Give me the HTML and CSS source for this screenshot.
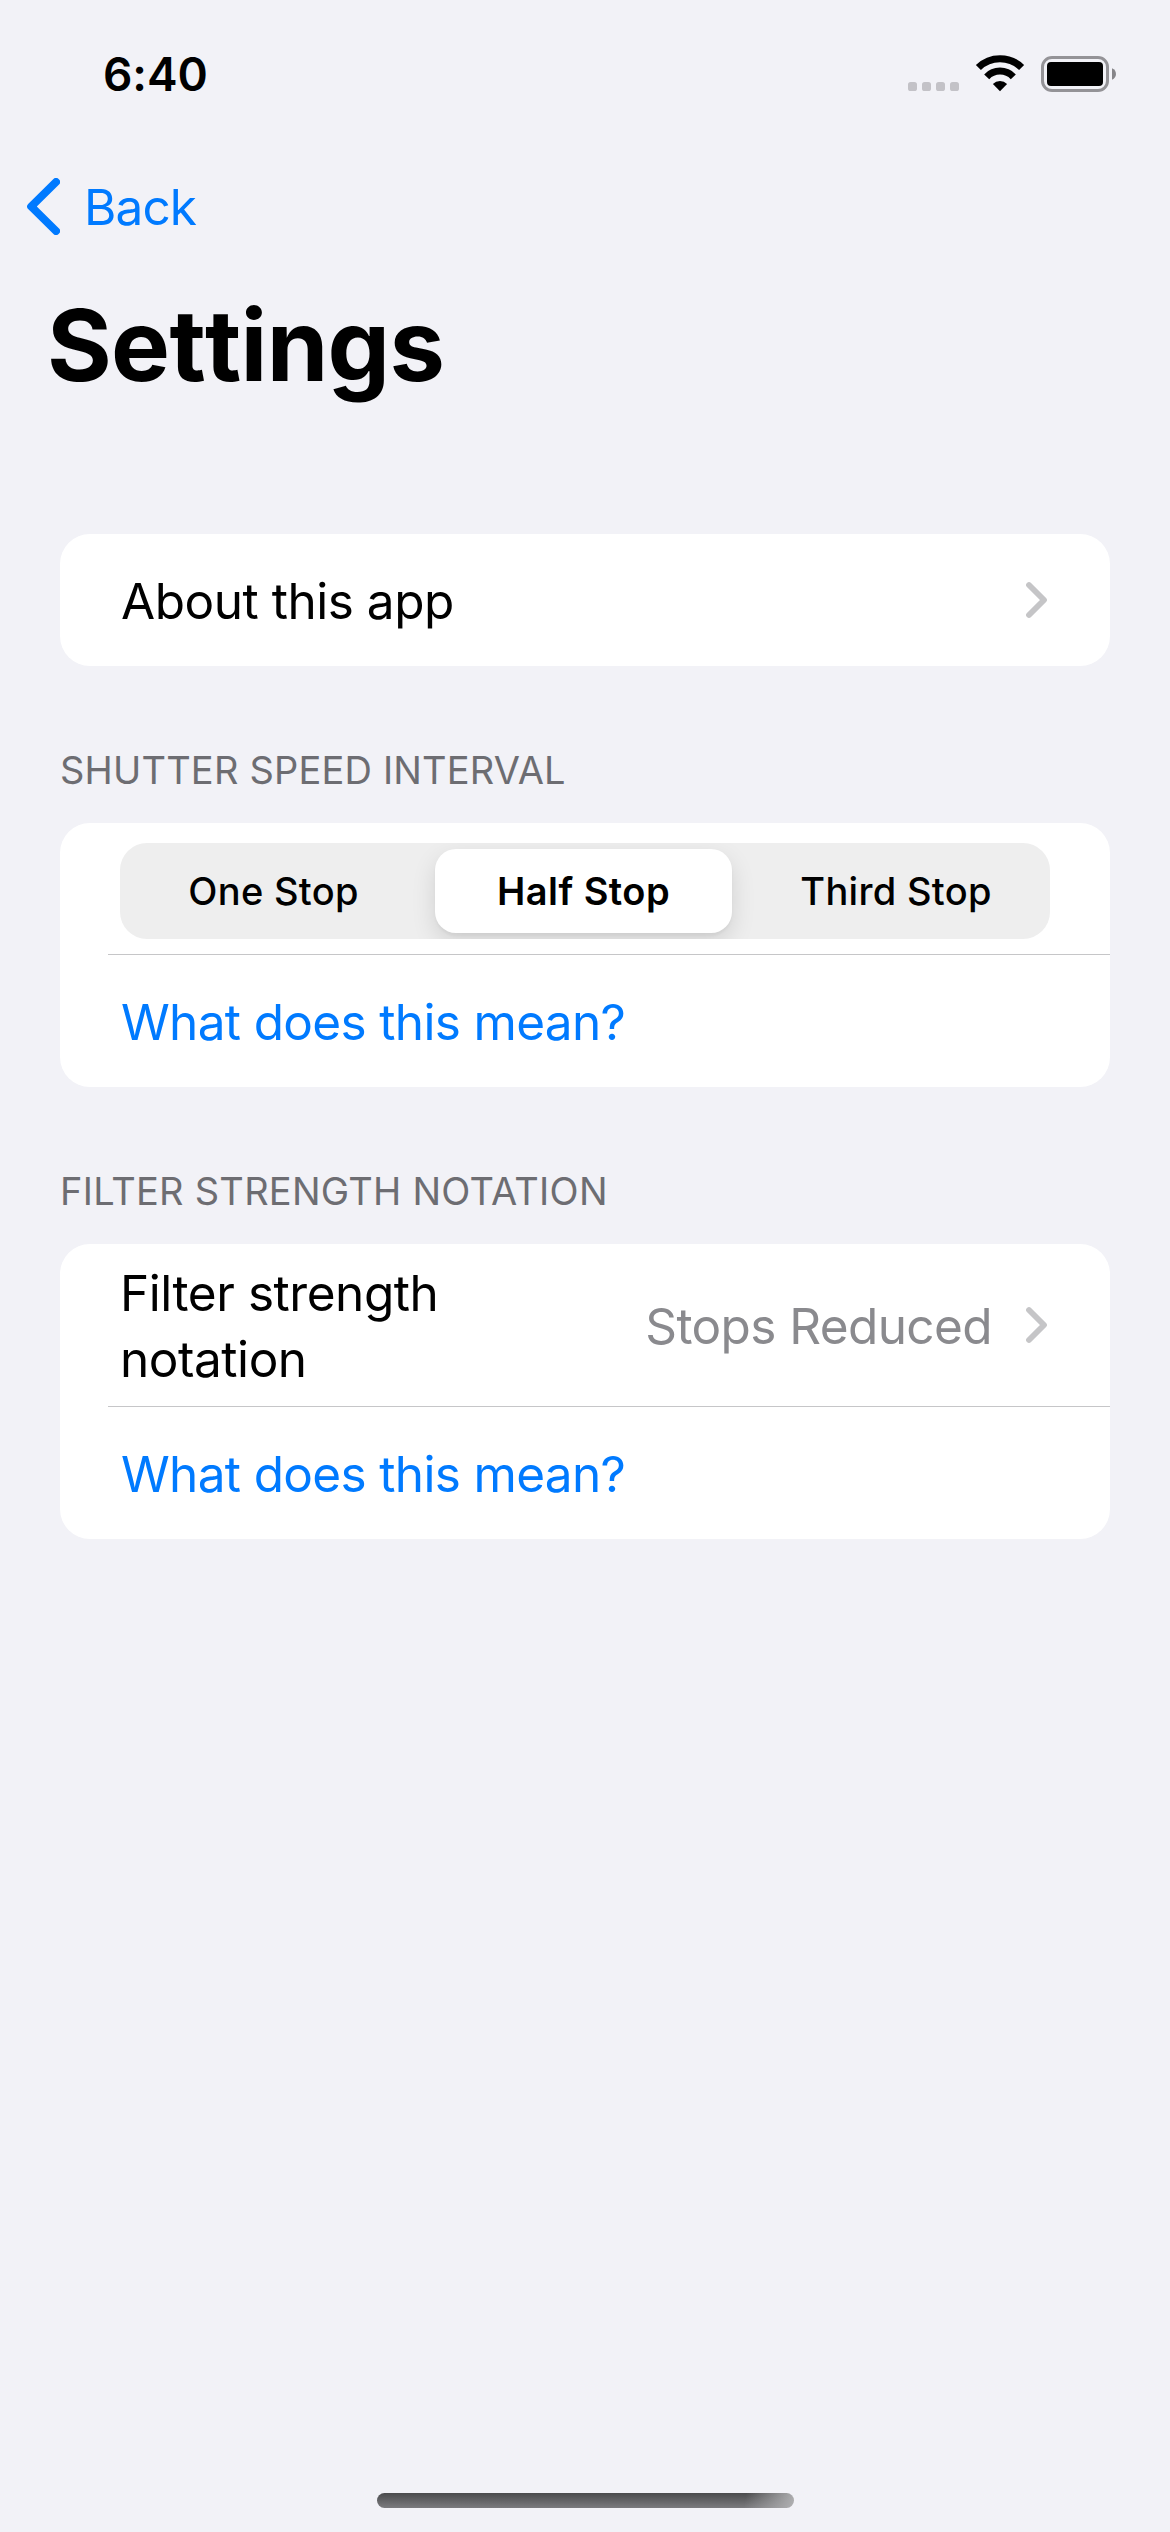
FILE: index.html
```
<!DOCTYPE html>
<html lang="en">
<head>
<meta charset="utf-8">
<title>Settings</title>
<link rel="stylesheet" href="styles.css">
</head>
<body>
<div class="screen">
  <header class="status-bar">
    <div class="time">6:40</div>
    <div class="status-icons">
      <svg class="cellular" width="51" height="9" viewBox="0 0 51 9"><g fill="#c3c2c7"><rect width="9" height="9" rx="2.6"/><rect x="14" width="9" height="9" rx="2.6"/><rect x="28" width="9" height="9" rx="2.6"/><rect x="42" width="9" height="9" rx="2.6"/></g></svg>
      <svg class="wifi" width="50" height="37" viewBox="0 0 50 37">
        <g fill="none" stroke="#000">
          <path stroke-width="7.2" d="M3.4 12.5A31 31 0 0 1 46.6 12.5"/>
          <path stroke-width="7" d="M11.7 21.8A18.4 18.4 0 0 1 38.3 21.8"/>
        </g>
        <path d="M25 36.2L17.9 28.9A10 10 0 0 1 32.1 28.9Z"/>
      </svg>
      <svg class="battery" width="76" height="37" viewBox="0 0 76 37">
        <rect x="1.5" y="2.5" width="65" height="33" rx="9.5" fill="none" stroke="#949397" stroke-width="3"/>
        <rect x="6" y="7" width="56" height="24" rx="4"/>
        <path d="M71 13.3C76.3 15.3 76.3 22.7 71 24.7Z" fill="#868589"/>
      </svg>
    </div>
  </header>

  <nav class="nav-bar">
    <svg width="33" height="57" viewBox="0 0 33 57"><path d="M29 4L4.2 28.5L29 53" fill="none" stroke="#007aff" stroke-width="8" stroke-linecap="round" stroke-linejoin="round"/></svg>
    <a class="back">Back</a>
  </nav>

  <h1 class="title">Settings</h1>

  <main class="list">
    <section class="card">
      <div class="row">
        <span class="label about">About this app</span>
        <svg class="chevron" width="22" height="38" viewBox="0 0 22 38"><path d="M3 4L18 19L3 34"/></svg>
      </div>
    </section>

    <h2 class="section-title">SHUTTER SPEED INTERVAL</h2>
    <section class="card">
      <div class="picker-row">
        <div class="segments">
          <div class="segment first">One Stop</div>
          <div class="segment selected">Half Stop</div>
          <div class="segment last">Third Stop</div>
        </div>
      </div>
      <div class="separator"></div>
      <div class="row"><a class="label link">What does this mean?</a></div>
    </section>

    <h2 class="section-title notation-title">FILTER STRENGTH NOTATION</h2>
    <section class="card">
      <div class="row tall">
        <span class="label notation">Filter strength notation</span>
        <span class="label value">Stops Reduced</span>
        <svg class="chevron" width="22" height="38" viewBox="0 0 22 38"><path d="M3 4L18 19L3 34"/></svg>
      </div>
      <div class="separator"></div>
      <div class="row"><a class="label link">What does this mean?</a></div>
    </section>
  </main>

  <footer class="home"><div class="home-indicator"></div></footer>
</div>
</body>
</html>
```
FILE: styles.css
```
* { box-sizing: border-box; }

body {
  margin: 0;
  background: #f2f2f7;
  color: #000;
  font-family: Inter, "Liberation Sans", sans-serif;
}

.screen {
  display: flex;
  flex-direction: column;
  width: 1170px;
  height: 2532px;
}

svg { display: block; flex: none; }

.status-bar {
  display: flex;
  justify-content: space-between;
  align-items: center;
  height: 148px;
  padding: 0 53px 0 103px;
}

.time {
  font-size: 46px;
  font-weight: 600;
  letter-spacing: -0.1px;
}

.status-icons {
  display: flex;
  align-items: flex-end;
  padding-bottom: 1px;
}

.cellular { margin-bottom: 1px; }
.wifi { margin-left: 16px; }
.battery { margin-left: 16px; }

.nav-bar {
  display: flex;
  align-items: center;
  gap: 24px;
  height: 118px;
  padding-left: 27px;
}

.nav-bar svg { margin-bottom: 1px; }

.back {
  color: #007aff;
  font-size: 49.5px;
  letter-spacing: -0.9px;
}

.title {
  height: 158px;
  margin: 0;
  padding-left: 47px;
  font-size: 99px;
  font-weight: 700;
  font-kerning: none;
  font-variant-ligatures: none;
  letter-spacing: -0.7px;
  line-height: 158px;
}

.list {
  flex: 1;
  padding: 110px 60px 0;
}

.card {
  overflow: hidden;
  border-radius: 30px;
  background: #fff;
}

.row {
  display: flex;
  align-items: center;
  height: 132px;
  padding: 0 62px 0 60px;
}

.row.tall { height: 162px; }

.label {
  padding-top: 2px;
  font-size: 49.5px;
  line-height: 66px;
}

.about { flex: 1; padding-left: 1px; letter-spacing: -0.47px; }
.link { padding-left: 1px; color: #007aff; letter-spacing: -0.66px; }
.notation { width: 400px; letter-spacing: -0.45px; }
.value {
  margin-left: auto;
  margin-right: 34px;
  color: #8a8a8e;
  letter-spacing: -0.6px;
}

.chevron path {
  fill: none;
  stroke: #c5c5c7;
  stroke-width: 5.8;
  stroke-linecap: round;
  stroke-linejoin: round;
}

.section-title {
  height: 157px;
  margin: 0;
  padding-top: 81px;
  color: #6d6d72;
  font-size: 38px;
  font-weight: 400;
  line-height: 46px;
  letter-spacing: 0.18px;
}

.notation-title { letter-spacing: 0.25px; }

.picker-row {
  height: 131px;
  padding: 20px 60px 15px;
}

.segments {
  display: grid;
  grid-template-columns: repeat(3, 1fr);
  height: 96px;
  overflow: hidden;
  border-radius: 27px;
  background: #eee;
}

.segment {
  display: flex;
  align-items: center;
  justify-content: center;
  font-size: 38px;
  font-weight: 500;
  letter-spacing: 0.3px;
}

.first { padding-right: 3px; }
.last { padding-left: 2px; }

.selected {
  margin: 6px 8px 6px 5px;
  border-radius: 21px;
  background: #fff;
  box-shadow: 0 9px 24px rgba(0, 0, 0, 0.12), 0 3px 3px rgba(0, 0, 0, 0.04);
  font-weight: 600;
  letter-spacing: 0.45px;
}

.separator {
  height: 1px;
  margin-left: 48px;
  background: #c6c6c8;
}

.home {
  display: flex;
  justify-content: center;
  height: 39px;
}

.home-indicator {
  width: 417px;
  height: 15px;
  border-radius: 8px;
  background:
    linear-gradient(100deg, rgba(176, 176, 178, 0) 88%, #b0b0b2 100%),
    linear-gradient(#4b4b4d, #7b7b7e);
}
```
